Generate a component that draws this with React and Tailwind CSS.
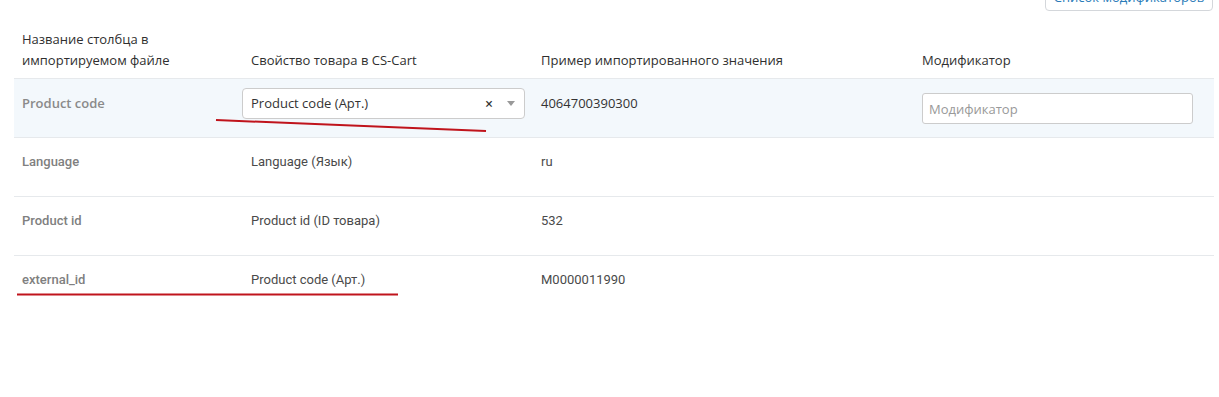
import React from "react";

const rows = [
  { name: "Language", prop: "Language (Язык)", sample: "ru" },
  { name: "Product id", prop: "Product id (ID товара)", sample: "532" },
  { name: "external_id", prop: "Product code (Арт.)", sample: "M0000011990" },
];

export default function App() {
  return (
    <div className="relative min-h-[397px] bg-white text-[13px] text-[#333] font-['Open_Sans',sans-serif]">
      {/* toolbar, cut off at the top */}
      <div className="flex h-[29px] justify-end pr-[6px]">
        <button className="-mt-[18px] h-[29px] w-[168px] rounded-[4px] border border-[#d4d7db] bg-white text-[13px] leading-[12px] text-[#2a7cb8]">
          Список модификаторов
        </button>
      </div>

      <div className="mx-[14px] w-[1200px]">
        {/* header */}
        <div className="grid grid-cols-[228px_291px_381px_300px] items-end border-b border-[#e6e9ec] pb-[7px] font-medium leading-[21px] text-[#2f2f2f]">
          <div className="px-2">
            Название столбца в<br />импортируемом файле
          </div>
          <div className="pl-[9px]">Свойство товара в CS-Cart</div>
          <div className="px-2">Пример импортированного значения</div>
          <div className="px-2">Модификатор</div>
        </div>

        {/* row 1 - editable */}
        <div className="grid h-[59px] grid-cols-[228px_291px_381px_300px] border-b border-[#e6e9ec] bg-[#f3f8fc]">
          <div className="px-2 pt-[15px] font-semibold leading-[18px] text-[#8a8a8a]">Product code</div>
          <div className="pt-[9px]">
            <div className="flex h-[31px] w-[283px] items-center rounded-[4px] border border-[#ccc] bg-white pl-[8px] pr-[9px] text-[#333]">
              <span className="flex-1">Product code (Арт.)</span>
              <span className="mr-[14px] text-[14px] font-semibold leading-none text-[#333]">×</span>
              <span className="h-0 w-0 border-x-[4px] border-t-[5px] border-x-transparent border-t-[#999]" />
            </div>
          </div>
          <div className="px-2 pt-[15px] leading-[18px]">4064700390300</div>
          <div className="px-2 pt-[14px]">
            <input
              placeholder="Модификатор"
              className="h-[31px] w-[271px] rounded-[3px] border border-[#ccc] bg-white px-[6px] text-[13px] text-[#333] placeholder-[#999] outline-none"
            />
          </div>
        </div>

        {rows.map((r, i) => (
          <div
            key={r.name}
            className={
              "grid h-[59px] grid-cols-[228px_291px_381px_300px] font-['Roboto',sans-serif] " +
              (i < rows.length - 1 ? "border-b border-[#e6e9ec]" : "")
            }
          >
            <div className="px-2 pt-[15px] font-medium leading-[18px] text-[#808080]">{r.name}</div>
            <div className="pl-[9px] pt-[15px] leading-[18px] text-[#4a4a4a]">{r.prop}</div>
            <div className="px-2 pt-[15px] leading-[18px] text-[#4a4a4a]">{r.sample}</div>
            <div />
          </div>
        ))}
      </div>

      {/* red annotation strokes */}
      <svg className="pointer-events-none absolute left-0 top-0" width="1219" height="397">
        <line x1="216" y1="120" x2="486" y2="131" stroke="#c0141c" strokeWidth="2" />
        <line x1="17" y1="294.5" x2="398" y2="294.5" stroke="#c0141c" strokeWidth="2" />
      </svg>
    </div>
  );
}
